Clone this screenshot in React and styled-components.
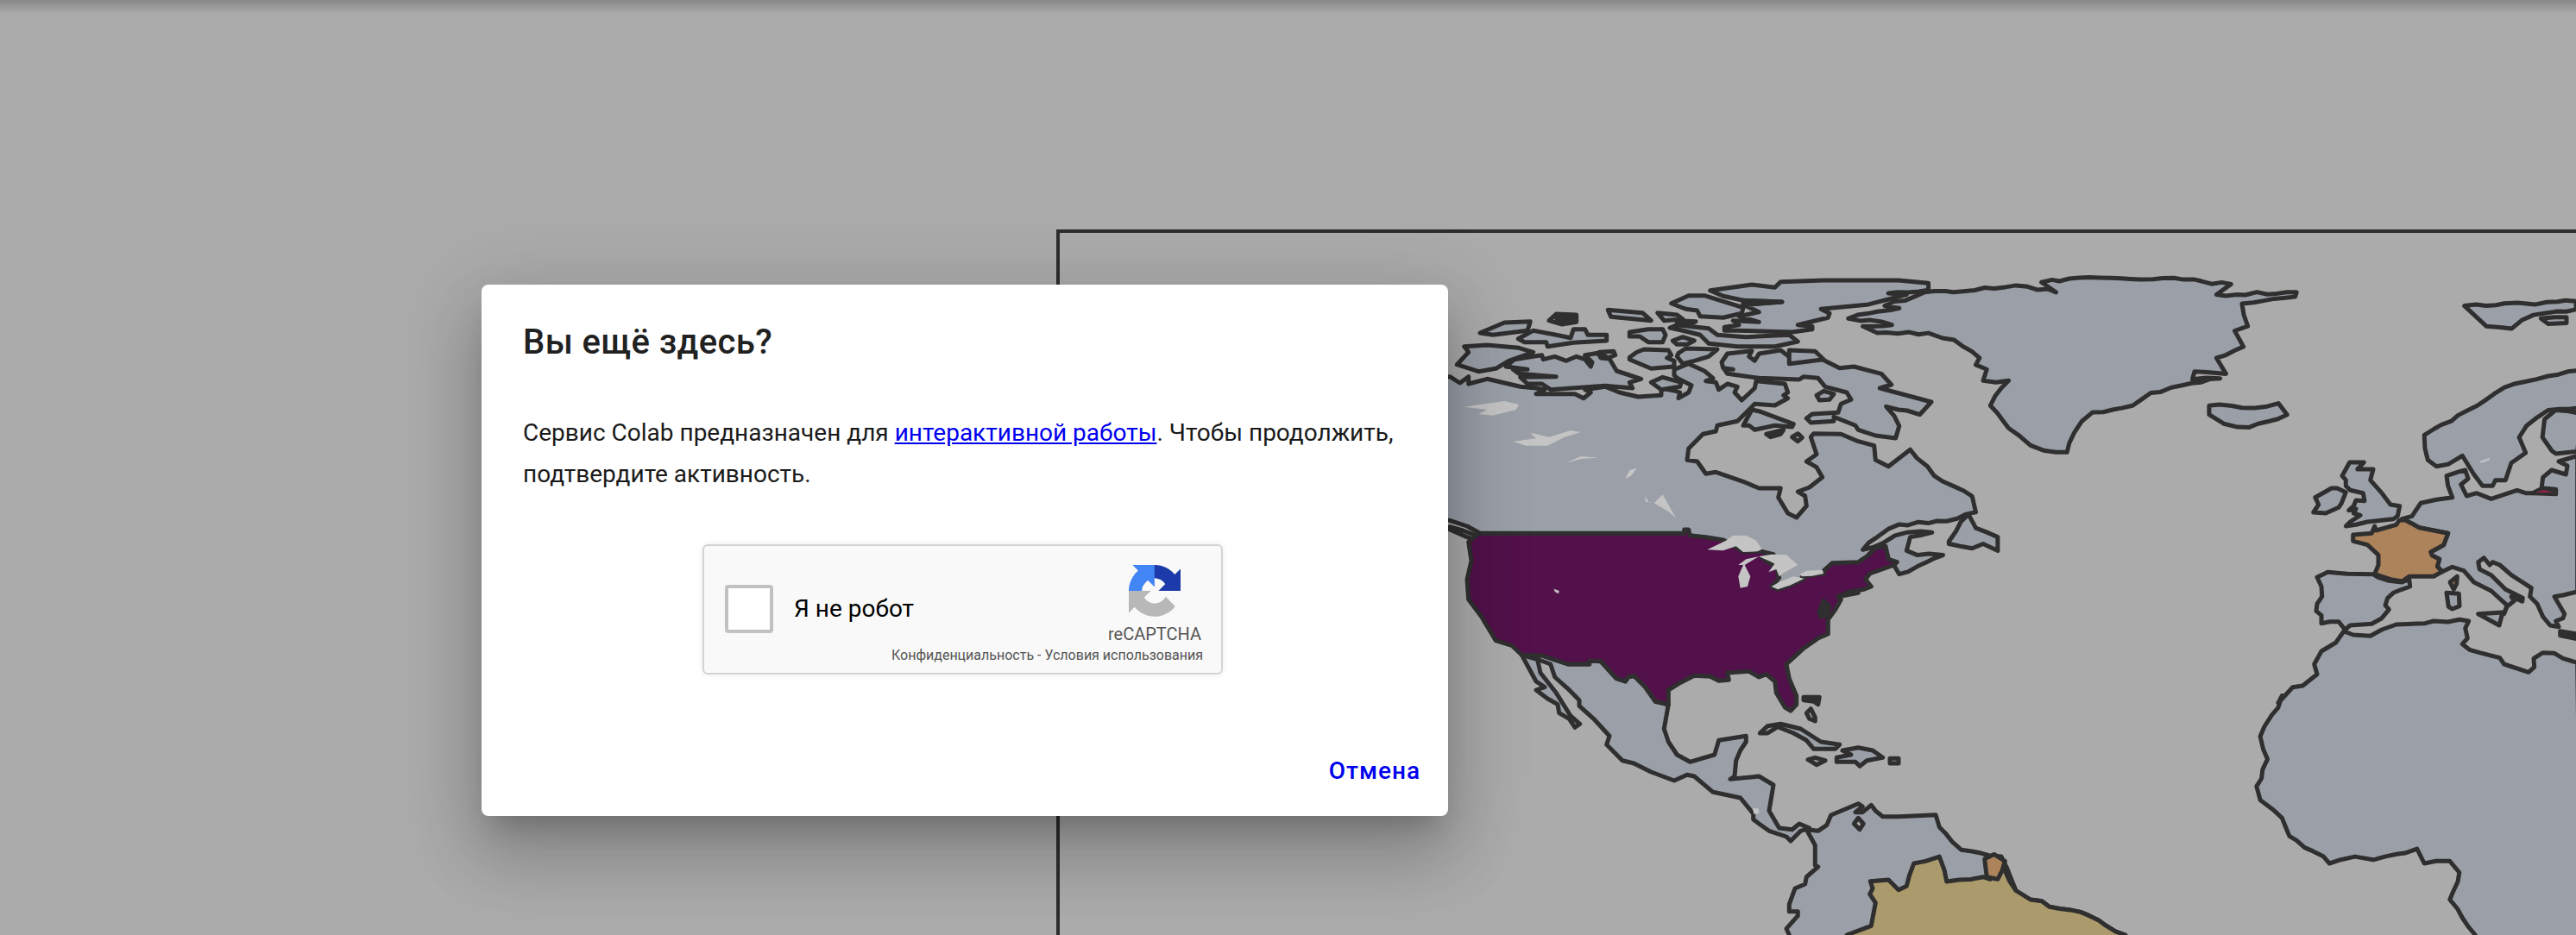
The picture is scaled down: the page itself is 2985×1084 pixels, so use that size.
import React from "react";
import styled, { createGlobalStyle } from "styled-components";

const Global = createGlobalStyle`
  html, body { margin: 0; padding: 0; background: #ababab; overflow: hidden; }
  body { font-family: Roboto, "Noto Sans", sans-serif; }
`;

const Page = styled.div`
  position: relative;
  width: 2985px;
  height: 1084px;
  overflow: hidden;
  display: flex;
  flex-direction: column;
  background: #ababab;
`;
const TopShadow = styled.div`
  position: absolute;
  inset: 0 0 auto 0;
  height: 16px;
  background: linear-gradient(to bottom, #888888, #ababab);
`;
const MapFrame = styled.section`
  margin: 266px 0 0 1224px;
  flex: 1;
  border-left: 4px solid #2d2d2d;
  border-top: 4px solid #2d2d2d;
  display: flex;
  min-height: 0;
`;
const MapSvg = styled.svg`
  display: block;
  flex: 1;
  height: 100%;
`;
const Land = styled.path`
  fill: ${(p) => p.$fill || "#9a9fa8"};
  stroke: #2f2f2f;
  stroke-width: 5;
  stroke-linejoin: round;
`;
const Lake = styled.path`
  fill: ${(p) => p.$fill || "#c4c4c4"};
`;
const Overlay = styled.div`
  position: absolute;
  inset: 0;
  display: flex;
  align-items: flex-start;
  padding: 330px 0 0 558px;
  box-sizing: border-box;
`;
const Dialog = styled.div`
  width: 1120px;
  height: 616px;
  box-sizing: border-box;
  background: #fff;
  border-radius: 8px;
  padding: 43px 16px 16px 48px;
  display: flex;
  flex-direction: column;
  box-shadow: 0 22px 30px -14px rgba(0,0,0,.2), 0 48px 76px 6px rgba(0,0,0,.14), 0 18px 92px 16px rgba(0,0,0,.12);
`;
const Title = styled.h2`
  margin: 0;
  font: 500 40px/48px Roboto, sans-serif;
  letter-spacing: 0.4px;
  color: #212121;
`;
const Body = styled.p`
  margin: 57px 32px 0 0;
  font: 400 28px/48px Roboto, sans-serif;
  color: #1a1a1a;
`;
const Link = styled.a`
  color: #0000ee;
  text-decoration: underline;
`;
const Recaptcha = styled.div`
  align-self: flex-start;
  margin: 57px 0 0 208px;
  width: 603px;
  height: 151px;
  box-sizing: border-box;
  display: flex;
  align-items: stretch;
  justify-content: space-between;
  padding: 0 21px 0 24px;
  background: #f9f9f9;
  border: 2px solid #d3d3d3;
  border-radius: 6px;
  box-shadow: 0 0 8px rgba(0,0,0,.08);
`;
const Check = styled.div`
  display: flex;
  align-items: center;
  gap: 24px;
  height: 145px;
  flex: none;
`;
const CheckBox = styled.div`
  flex: none;
  width: 56px;
  height: 56px;
  box-sizing: border-box;
  background: #fff;
  border: 4px solid #c1c1c1;
  border-radius: 4px;
`;
const CheckLabel = styled.span`
  font: 400 28px/32px Roboto, sans-serif;
  white-space: nowrap;
  color: #000;
`;
const Brand = styled.div`
  flex: none;
  width: 200px;
  display: flex;
  flex-direction: column;
  align-items: flex-end;
  padding-top: 22px;
`;
const BrandMark = styled.div`
  display: flex;
  flex-direction: column;
  align-items: center;
  margin-right: 2px;
`;
const BrandName = styled.span`
  font: 400 20px/24px Roboto, sans-serif;
  color: #555;
  margin-top: 8px;
`;
const Terms = styled.span`
  font: 400 16px/22px Roboto, sans-serif;
  margin-top: 2px;
  color: #555;
  white-space: nowrap;
`;
const Actions = styled.div`
  margin-top: auto;
  display: flex;
  justify-content: flex-end;
`;
const CancelButton = styled.button`
  height: 72px;
  border: 0;
  background: none;
  padding: 0 16px;
  font: 500 28px/72px Roboto, sans-serif;
  letter-spacing: 1px;
  color: #0000ee;
`;

const parse = (s) => s.trim().split(/\s+/).map((q) => q.split(",").map(Number));
const noise = (x, y) => {
  const v = Math.sin(x * 12.9898 + y * 78.233) * 43758.5453;
  return v - Math.floor(v);
};
// Low-resolution coastlines are jagged: subdivide the long coarse runs a little.
const rough = (pts) => {
  const out = [];
  pts.forEach((a, i) => {
    out.push(a);
    const b = pts[i + 1];
    if (!b) return;
    const len = Math.hypot(b[0] - a[0], b[1] - a[1]);
    const n = Math.floor(len / 11);
    for (let k = 1; k < n; k++) {
      const x = a[0] + ((b[0] - a[0]) * k) / n;
      const y = a[1] + ((b[1] - a[1]) * k) / n;
      out.push([x + (noise(x, y) - 0.5) * 4, y + (noise(y, x) - 0.5) * 4]);
    }
  });
  return out;
};
const z3 = (s) => rough(parse(s).map(([x, y]) => [1660 + x * 0.845, 260 + y * 0.5255]));
const crop = (x0, y0) => (s) => parse(s).map(([x, y]) => [x0 + x / 3, y0 + y / 3]);
const z7 = crop(2640, 520);
const zA = crop(1680, 600);
const zB = crop(1680, 320);
const zC = crop(1680, 820);
const d = (...segs) =>
  "M" + segs.flat().map(([x, y]) => `${x.toFixed(1)} ${y.toFixed(1)}`).join("L") + "Z";

const land = [
  // Greenland
  d(z3("835,128 915,118 1030,122 1095,132 1075,155 1185,150 1183,160 1110,175 1118,225 1100,235 1112,270 1075,295 1088,330 1045,325 1042,342 1080,340 985,372 960,400 905,415 880,460 870,503 855,503 820,488 790,450 765,400 790,345 755,345 760,320 745,310 750,295 715,255 680,240 610,240 590,225 630,222 570,208 640,185 620,180 675,150 770,142 800,135 855,150")),
  // Arctic archipelago
  d(zB("905,50 1050,30 1130,40 1150,20 1300,15 1560,15"), z3("680,130 680,145 625,152 650,155"), zB("1450,100 1290,115 1320,130 1315,145 1210,170 1260,175 1260,185 1190,195 1000,190 955,190 955,178 1005,170 985,155 1075,160 1005,140 1075,125 1020,100 1155,90 1020,85 950,70")),
  d(zB("770,95 830,68 885,68 1020,110 1015,130 950,145 870,140 860,120 820,115")),
  d(zB("105,198 190,162 280,158 270,190 150,205")),
  d(zB("345,155 370,132 440,135 440,160 390,168")),
  d(zB("550,118 670,128 700,155 560,142")),
  d(zB("722,128 790,135 810,150 745,155")),
  d(zB("238,218 290,190 370,205 420,215 430,185 470,185 480,205 545,205 545,225 430,232 340,245 335,230 260,230")),
  d(zB("25,308 65,265 50,245 130,240 240,250 290,265 205,295 160,322 100,332")),
  d(zB("625,195 690,185 740,185 750,205 740,230 690,230 660,210 625,210")),
  d(zB("775,225 810,212 850,225 825,238 790,238")),
  d(zB("765,180 790,170 900,182 930,205 1030,212 1180,205 1210,228 1130,245 1000,245 900,235 870,205 810,190")),
  d(zB("795,268 820,252 930,255 900,280 850,295 810,305 790,280")),
  d(zB("625,283 650,265 675,255 760,258 770,275 755,285 780,295 780,315 700,322 625,290")),
  // Canada mainland
  d(
    zB("-60,350 0,350 35,372 65,350 65,375 130,358 245,385 300,390 330,395 300,410 435,410 465,425 490,405 470,395 540,385 590,405 655,420 735,415 735,390 785,400 800,405 795,425 830,405 840,380 790,355 780,345 780,325 830,305 885,330 915,355 890,365 925,370 935,395 965,375 1000,385 990,405 1015,432 1060,390 1065,365 1165,375 1175,405 1160,415 1175,425 1130,450 1060,445 1050,455 1000,505 930,520 925,540 880,550 830,600 825,640 860,645 890,688 925,682 1020,715 1075,738 1150,738 1142,770 1175,825 1205,840 1240,800 1235,765 1210,750 1250,735 1295,700 1275,665 1240,645 1275,620 1255,560 1265,548 1360,550 1420,575 1475,590 1480,640 1525,662"),
    z3("655,497 688,555 740,600 745,635 705,655 640,662 610,690 590,718 650,680 685,680 655,690 650,720 665,730 700,730 640,772 630,745"),
    zA("1500,130 1300,260 1150,270 1000,200 950,110 105,80 105,55 60,30 0,10 -60,10")
  ),
  d(zA("0,32 45,45 85,60 118,105 105,85 60,68 0,42")),
  d(zB("195,315 225,290 320,275 325,290 365,280 405,295 440,280 470,290 490,315 495,300 470,275 515,268 525,285 555,288 580,330 665,358 625,370 635,390 540,382 350,395 320,375 270,375 245,352 370,350 240,340 220,325 270,325")),
  d(zB("520,265 570,262 575,275 550,285")),
  d(zB("700,370 740,352 805,370 800,385 735,395")),
  // Baffin
  d(
    zB("945,300 965,270 1050,260 1040,280 1060,295 1075,270 1150,258 1185,285 1245,290 1295,290 1355,320 1405,315 1500,340 1535,378 1495,390"),
    z3("684,392 668,420 622,402 640,445 635,472"),
    zB("1480,555 1420,535 1410,520 1335,490 1335,505 1255,510 1240,495 1260,480 1350,475 1360,445 1395,430 1380,405 1305,385 1280,355 1230,350 1215,360 1075,355 965,340 955,325 985,325 950,320")
  ),
  d(zB("1180,258 1270,262 1300,290 1180,305")),
  d(zB("1275,415 1300,400 1335,410 1320,430 1285,432")),
  d(zB("1020,520 1050,465 1075,470 1195,515 1190,525 1130,520 1060,535 1040,520")),
  d(zB("1100,550 1160,535 1150,550 1115,560")),
  d(zB("1190,560 1210,548 1225,562 1210,575")),
  // Newfoundland
  d(z3("708,700 735,640 745,670 775,690 775,720 755,705 740,715 708,705")),
  // Iceland
  d(z3("1065,400 1110,405 1160,395 1172,420 1120,448 1085,440 1065,420")),
  // Svalbard
  d(z3("1415,180 1500,175 1568,170 1568,188 1510,200 1480,230 1445,225")),
  d(z3("1520,208 1555,205 1555,218 1530,220")),
  // Baja, Mexico, Central America
  d(zA("250,478 300,570 330,590 300,600 340,630 375,650 380,680"), zC("415,40 435,70 452,58 420,30"), zA("370,610 315,540 305,495 320,490")),
  d(
    zA("250,478 320,480 410,510 485,510 485,498 525,500 580,560 610,570 620,555 640,550 680,590 715,640 760,650"),
    zC("745,75 760,120 790,165 835,190 920,165 935,115 1030,100 1030,120 1010,150 995,185 990,240 975,250 1075,240 1125,270 1110,360 1145,420 1190,425 1215,405 1250,420 1220,430 1185,465 1170,450 1110,430 1075,405 1055,390 1055,370 1010,315 915,295 850,240 825,235 780,255 700,225 640,195 600,185 545,130 555,100 500,40 450,-5"),
    zA("450,635 410,595 365,555 350,510 310,495")
  ),
  // Caribbean
  d(zC("1078,90 1105,65 1150,58 1220,75 1290,120 1355,130 1340,145 1265,145 1240,115 1195,90 1140,68 1105,90")),
  d(zC("1365,150 1420,140 1470,150 1505,175 1450,185 1425,205 1410,190 1345,190 1345,175 1395,165")),
  d(zC("1245,182 1270,175 1305,185 1275,200")),
  d(zC("1530,178 1560,178 1560,195 1530,195")),
  d(zA("1240,680 1255,665 1270,695 1270,708 1250,700")),
  // South America
  d(
    zC("1240,425 1280,430 1310,410 1325,375 1420,335 1435,345 1410,365 1435,365 1465,340 1480,360 1505,380 1560,380"),
    z3("690,1303 695,1330 725,1380 780,1395 800,1470 820,1490 860,1510 900,1525 950,1568 960,1600"),
    zC("1170,900 1170,830 1180,792 1170,770 1210,725 1210,710 1180,710 1180,685 1200,630 1235,615 1240,590 1280,555 1270,550 1270,480")
  ),
  // Africa
  d(
    z7("0,885 50,830 85,825 135,785 125,750 150,705 200,675 228,635 260,648 320,652 360,630 410,612 510,608 540,600 590,603 630,595 662,600 650,625 658,660 640,680 665,700 700,710 770,728 785,750 870,778 890,760 888,730 920,710 960,712 990,730 1040,745"),
    z3("1575,1600 1430,1600 1430,1568 1395,1490 1408,1430 1395,1405 1360,1410 1350,1378 1290,1402 1265,1395 1230,1410 1175,1350 1165,1310 1135,1270 1130,1240 1145,1180 1135,1130 1165,1040")
  ),
  // Scandinavia
  d(
    z3("1360,465 1420,410 1470,360 1530,335 1575,322 1575,405 1530,410 1500,445 1490,470"),
    z7("860,15 810,50 790,110 755,110 745,130 710,130 680,90 640,25 590,55 550,62 520,40 510,0")
  ),
  d(z3("1575,418 1540,410 1525,430 1522,470 1535,500"), z7("965,18 1040,10")),
  // Europe
  d(z7("430,245 465,235 495,190 550,178 605,170 590,130 585,95 630,80 650,75 660,105 635,125 655,165 690,155 740,175 830,145 860,155 885,155 915,140 920,100 950,75 1000,90 1005,60 975,45 1040,25 1040,498 990,510 960,515 995,575 990,590 965,600 975,620 945,615 920,585 900,540 875,515 880,485 810,440 770,405 745,395 735,405 715,380 695,395 700,420 740,440 790,490 850,520 848,532 810,515 820,530 795,550 785,575 795,545 740,495 680,465 645,425 605,412 570,428 553,410 560,385 535,372 530,360 575,335 590,295 490,275 440,248")),
  // Britain, Ireland, Iberia, islands
  d(z7("222,95 248,48 298,48 275,72 330,72 320,110 360,155 390,195 422,200 415,235 400,245 310,255 270,265 235,270 250,255 285,232 262,225 270,210 245,215 262,200 270,180 300,182 295,155 250,145 235,130 235,110")),
  d(z7("128,170 185,138 205,138 235,152 220,190 210,205 165,225 122,222 140,195")),
  d(z7("135,448 172,430 240,436 330,437 345,447 385,460 430,465 455,455 458,480 430,490 400,502 380,520 372,545 385,560 360,590 325,610 250,615 232,630 210,602 180,602 150,608 150,580 132,565 135,540 152,515 150,480")),
  d(z7("695,575 780,570 768,615")),
  d(z7("585,502 628,505 630,548 605,558 592,550")),
];

const lakes = [
  zA("895,112 960,80 985,62 1030,62 1065,80 1085,110 1070,118 1020,120 995,100 950,115"),
  zA("1075,135 1120,128 1170,130 1210,165 1165,190 1145,205 1135,180 1108,190 1130,160 1085,140"),
  zA("1003,165 1030,145 1075,135 1050,150 1025,165 1045,205 1035,240 1010,245 1003,205 1020,165"),
  zA("1118,240 1150,222 1195,205 1232,212 1185,235 1140,250"),
  zA("1215,198 1240,185 1295,182 1300,195 1260,203 1225,205"),
  zA("362,248 380,255 378,265 365,258"),
  zB("50,455 190,435 240,447 230,465 150,485 100,480 130,465"),
  zB("220,575 300,565 280,545 345,560 420,537 455,543 400,560 340,590 265,590"),
  zB("405,650 455,627 520,632 460,635"),
  zB("610,705 625,675 650,668 630,695"),
  zB("680,765 690,785 710,790 740,760 785,840 760,820 710,790 680,785"),
  zC("1052,352 1072,352 1076,368 1058,372"),
  z7("700,45 735,32 735,40 705,50"),
];

const usa = d(zA("100,55 815,55 815,42 830,42 835,62 890,68 950,78 1020,118 1085,118 1125,128 1085,140 1135,175 1145,210 1120,240 1140,250 1185,235 1232,212 1225,205 1300,195 1300,185 1330,158 1420,155 1450,135 1480,105 1515,100 1525,145 1555,155 1545,165 1460,195 1445,215 1465,240 1440,250 1390,258 1350,275 1360,285 1340,320 1315,355 1315,405 1280,420 1230,455 1170,510 1180,560 1205,620 1205,650 1185,672 1165,660 1135,610 1130,570 1100,545 1075,555 1040,535 965,540 970,565 935,568 905,553 850,550 800,575 760,600 760,650 715,640 680,590 640,550 620,555 610,570 580,560 525,500 485,498 485,510 410,510 320,480 250,478 215,445 160,428 110,345 65,285 60,215 75,150 65,85"));
const brazil = d(zC("1380,792 1465,760 1480,680 1460,650 1470,630 1462,605 1525,600 1560,635"), z3("650,1460 660,1410 695,1395 705,1450 755,1440 765,1445 780,1410 800,1470 820,1490 860,1510 900,1525 950,1568 960,1600 560,1600"));
const guiana = d(z3("757,1400 770,1390 785,1405 775,1445 760,1440"));
const maracaibo = d(zC("1405,405 1420,385 1438,405 1425,425"));
const france = d(z7("440,248 490,275 590,295 575,335 530,360 535,372 560,385 553,410 570,428 540,445 455,445 430,462 390,455 335,437 348,405 348,370 310,335 260,322 260,300 325,295 335,270 340,285 410,265 420,250"));
const corsica = d(z7("597,465 622,445 620,470 610,490"));
const darkMarks = [
  z7("980,635 1040,645 1040,662 980,650"),
  z7("885,155 920,138 965,142 965,158"),
  zA("1230,625 1285,625 1280,650 1265,640 1230,635"),
  zA("1300,290 1320,310 1310,340 1290,345 1285,330"),
  zA("1350,275 1420,262 1390,258"),
  zB("790,155 855,158 830,170 790,170"),
  zB("1020,85 1155,90 1020,100"),
  zB("370,145 430,145 430,155 380,158"),
];
const kaliningradCore = d(z7("893,152 925,145 955,152"));

const LogoMark = () => (
  <svg width="60" height="60" viewBox="0 0 64 64" aria-hidden="true">
    <path d="M64 31.955l-.033-1.37V4.687l-7.16 7.16C50.948 4.674 42.033.093 32.05.093c-10.4 0-19.622 4.96-25.458 12.64l11.736 11.86a15.55 15.55 0 0 1 4.754-5.334c2.05-1.6 4.952-2.906 8.968-2.906.485 0 .86.057 1.135.163 4.976.393 9.288 3.14 11.828 7.124l-8.307 8.307 26.2.002" fill="#1c3aa9" />
    <path d="M31.862.001l-1.37.033H4.593l7.16 7.16C4.58 13.053 0 21.968 0 31.95c0 0 16.26.05 16.26 0 0-.485.057-.86.163-1.135.393-4.976 3.14-9.288 7.124-11.828l8.307 8.307L31.862 0" fill="#4285f4" />
    <path d="M.001 31.95l.033 1.37v25.898l7.16-7.16c5.86 7.173 14.775 11.754 24.76 11.754 10.4 0 19.622-4.96 25.458-12.64l-11.736-11.86a15.55 15.55 0 0 1-4.754 5.334c-2.05 1.6-4.952 2.906-8.968 2.906-.485 0-.86-.057-1.135-.163-4.976-.393-9.288-3.14-11.828-7.124l8.307-8.307-26.2-.002" fill="#b8b8b8" />
  </svg>
);

export default function App() {
  return (
    <Page>
      <Global />
      <MapFrame>
        <MapSvg viewBox="1228 270 1757 814" preserveAspectRatio="none" aria-hidden="true">
          {land.map((p, i) => (
            <Land key={i} d={p} />
          ))}
          <Land d={usa} $fill="#52114a" />
          <Land d={brazil} $fill="#ab9a6b" />
          <Land d={guiana} $fill="#ac835a" />
          <Land d={france} $fill="#ac835a" />
          <Land d={corsica} $fill="#ac835a" />
          <Land d={maracaibo} $fill="#ababab" />
          {darkMarks.map((p, i) => (
            <Land key={i} d={d(p)} $fill="#2f2f2f" />
          ))}
          <Lake d={kaliningradCore} $fill="#a3204a" />
          {lakes.map((p, i) => (
            <Lake key={i} d={d(p)} />
          ))}
        </MapSvg>
      </MapFrame>
      <TopShadow />
      <Overlay>
        <Dialog role="dialog">
          <Title>Вы ещё здесь?</Title>
          <Body>
            Сервис Colab предназначен для <Link href="#">интерактивной работы</Link>. Чтобы продолжить, подтвердите активность.
          </Body>
          <Recaptcha>
            <Check>
              <CheckBox />
              <CheckLabel>Я не робот</CheckLabel>
            </Check>
            <Brand>
              <BrandMark>
                <LogoMark />
                <BrandName>reCAPTCHA</BrandName>
              </BrandMark>
              <Terms>Конфиденциальность - Условия использования</Terms>
            </Brand>
          </Recaptcha>
          <Actions>
            <CancelButton>Отмена</CancelButton>
          </Actions>
        </Dialog>
      </Overlay>
    </Page>
  );
}
